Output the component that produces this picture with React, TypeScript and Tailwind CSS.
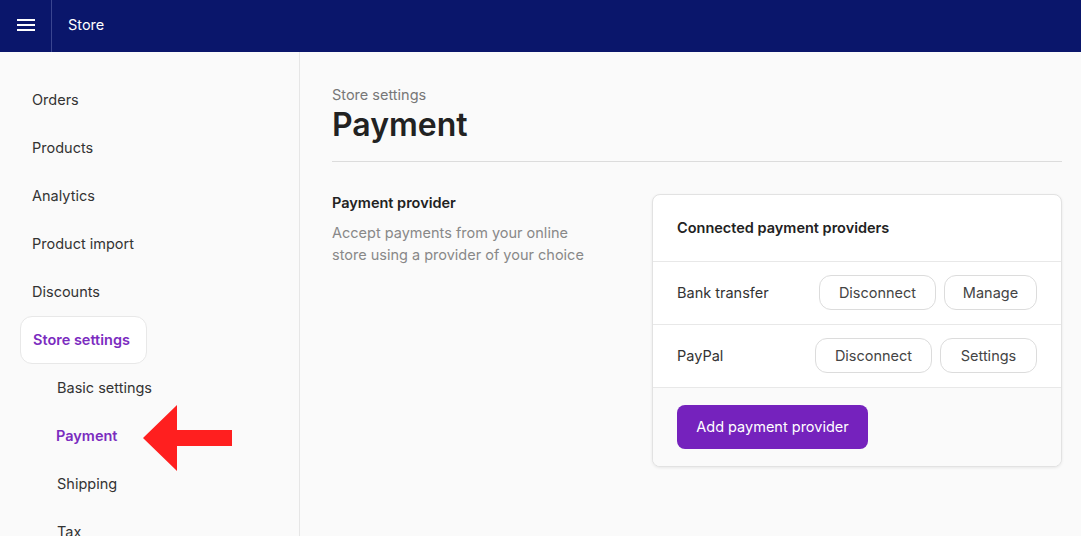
import React from 'react'

const font = { fontFamily: '"Inter", "Noto Sans", sans-serif' }

const navItems = ['Orders', 'Products', 'Analytics', 'Product import', 'Discounts']
const subItems = ['Basic settings', 'Payment', 'Shipping', 'Tax']

const providers = [
  { name: 'Bank transfer', action: 'Manage', width: 'w-[93px]' },
  { name: 'PayPal', action: 'Settings', width: 'w-[97px]' },
]

const App: React.FC = () => {
  return (
    <div className="h-[536px] w-[1081px] overflow-hidden bg-[#fafafa] text-[#222]" style={font}>
      {/* Top bar */}
      <header className="flex h-[52px] items-center bg-[#0a166b] text-white">
        <div className="flex h-full w-[52px] items-center justify-center border-r border-[#3a4590]">
          <svg width="18" height="14" viewBox="0 0 18 14" fill="white" className="-mt-[3px]">
            <rect x="0" y="1" width="18" height="2" />
            <rect x="0" y="6" width="18" height="2" />
            <rect x="0" y="11" width="18" height="2" />
          </svg>
        </div>
        <span className="-mt-[2px] pl-4 text-[14.5px]">Store</span>
      </header>

      <div className="flex">
        {/* Sidebar */}
        <aside className="relative h-[484px] w-[300px] shrink-0 border-r border-[#e6e6e6] px-5 pt-6">
          {navItems.map((item) => (
            <div key={item} className="flex h-12 items-center px-3 text-[14.5px] text-[#333]">
              {item}
            </div>
          ))}
          <div className="flex h-12 w-[127px] items-center rounded-xl border border-[#e8e8e8] bg-white px-3 text-[14.5px] font-semibold text-[#7b2cbf]">
            Store settings
          </div>
          {subItems.map((item) => (
            <div
              key={item}
              className={
                item === 'Payment'
                  ? 'flex h-12 items-center pl-9 text-[14.5px] font-semibold text-[#7b2cbf]'
                  : 'flex h-12 items-center pl-[37px] text-[14.5px] text-[#333]'
              }
            >
              {item}
            </div>
          ))}

          {/* Red pointer arrow */}
          <svg className="absolute left-[143px] top-[353px]" width="90" height="66" viewBox="0 0 90 66">
            <polygon points="0,33 34,0 34,25 89,25 89,41 34,41 34,66" fill="#ff1f1f" />
          </svg>
        </aside>

        {/* Main */}
        <main className="flex-1 px-8 pt-8">
          <div className="text-[14.5px] text-[#777]">Store settings</div>
          <h1 className="mt-[-1px] text-[32px] font-semibold leading-10 text-[#222]">Payment</h1>
          <div className="mt-[16px] border-t border-[#dcdcdc]" />

          <div className="mt-8 flex">
            <div className="w-[320px]">
              <div className="-mt-[1px] text-[14.5px] font-semibold leading-5 text-[#222]">Payment provider</div>
              <p className="mt-[9px] w-[270px] text-[14.5px] leading-[22px] text-[#888]">
                Accept payments from your online store using a provider of your choice
              </p>
            </div>

            <div className="w-[410px] overflow-hidden rounded-lg border border-[#e2e2e2] bg-white shadow-[0_1px_3px_rgba(0,0,0,0.08)]">
              <div className="flex h-[66px] items-center px-6 text-[14.5px] font-semibold text-[#222]">
                Connected payment providers
              </div>
              {providers.map((p) => (
                <div
                  key={p.name}
                  className="flex h-[63px] items-center justify-between border-t border-[#e8e8e8] pl-6 pr-6 text-[14.5px] text-[#333]"
                >
                  <span>{p.name}</span>
                  <div className="flex gap-2">
                    <button className="h-[35px] w-[117px] rounded-xl border border-[#dcdcdc] bg-white text-[14.5px] text-[#444]">
                      Disconnect
                    </button>
                    <button
                      className={`h-[35px] ${p.width} rounded-xl border border-[#dcdcdc] bg-white text-[14.5px] text-[#444]`}
                    >
                      {p.action}
                    </button>
                  </div>
                </div>
              ))}
              <div className="flex h-[79px] items-start border-t border-[#e8e8e8] bg-[#fafafa] px-6 pt-[17px]">
                <button className="h-[44px] w-[191px] rounded-lg bg-[#7522bd] text-[14.5px] text-white">
                  Add payment provider
                </button>
              </div>
            </div>
          </div>
        </main>
      </div>
    </div>
  )
}

export default App
